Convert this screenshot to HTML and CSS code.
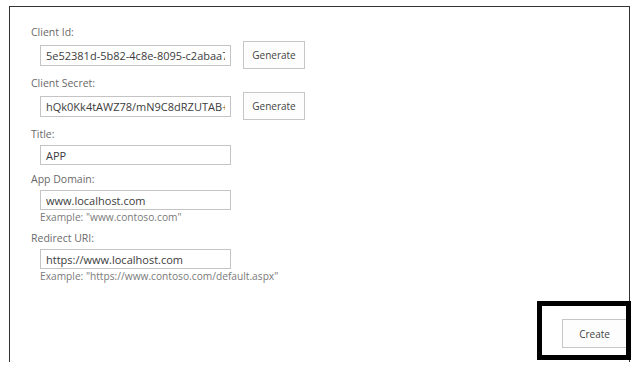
FILE: index.html
```html
<!DOCTYPE html>
<html>
  <head>
    <meta charset="UTF-8">
    <title>Register App</title>
    <link rel="stylesheet" href="styles.css">
  </head>
  <body>
    <div class="frame">
      <div class="label first">Client Id:</div>
      <div class="row">
        <input class="field" type="text" value="5e52381d-5b82-4c8e-8095-c2abaa77aa12">
        <button class="btn">Generate</button>
      </div>

      <div class="label">Client Secret:</div>
      <div class="row">
        <input class="field" type="text" value="hQk0Kk4tAWZ78/mN9C8dRZUTAB+QxYz=">
        <button class="btn">Generate</button>
      </div>

      <div class="label">Title:</div>
      <div class="row plain">
        <input class="field" type="text" value="APP">
      </div>

      <div class="label">App Domain:</div>
      <div class="row plain">
        <input class="field" type="text" value="www.localhost.com">
      </div>
      <div class="hint">Example: "www.contoso.com"</div>

      <div class="label">Redirect URI:</div>
      <div class="row plain">
        <input class="field" type="text" value="https://www.localhost.com">
      </div>
      <div class="hint">Example: "https://www.contoso.com/default.aspx"</div>

      <div class="footer">
        <button class="btn create">Create</button>
      </div>
      <!-- highlight box drawn over the create button -->
      <div class="highlight"></div>
    </div>
  </body>
</html>
```

FILE: styles.css
```css
body {
  margin: 0;
  background: #fff;
  font-family: "Open Sans", "Noto Sans", sans-serif;
}

.frame {
  position: relative;
  margin: 6px 0 0 9px;
  width: 598px;
  height: 355px;
  border: 1px solid #333;
  border-bottom: none;
  padding: 0 0 0 21px;
}

.label {
  font-size: 10.5px;
  line-height: 14px;
  color: #6a6a6a;
  margin-top: 7px;
}
.label.first {
  margin-top: 18px;
}

.row {
  display: flex;
  align-items: center;
  margin-top: 2px;
  padding-left: 9px;
  height: 28px;
}
.row.plain {
  height: auto;
  margin-top: 4px;
}

.field {
  width: 191px;
  height: 21px;
  box-sizing: border-box;
  border: 1px solid #c4c4c4;
  padding: 0 5px;
  font-family: inherit;
  font-size: 11px;
  color: #3c3c3c;
  outline: none;
}
.row.plain .field {
  height: 20px;
}

.btn {
  height: 28px;
  width: 62px;
  margin-left: 12px;
  border: 1px solid #c6c6c6;
  background: #fdfdfd;
  font-family: inherit;
  font-size: 10px;
  color: #444;
  padding: 0;
}

.hint {
  font-size: 10.2px;
  line-height: 13px;
  color: #7a7a7a;
  padding-left: 9px;
  margin-top: 1px;
}

.footer {
  display: flex;
  justify-content: flex-end;
  margin-top: 36px;
  padding-right: 2px;
}
.btn.create {
  width: 65px;
  height: 29px;
  margin: 0;
}

.highlight {
  position: absolute;
  left: 527px;
  top: 294px;
  width: 84px;
  height: 49px;
  border: 5px solid #000;
}
```
